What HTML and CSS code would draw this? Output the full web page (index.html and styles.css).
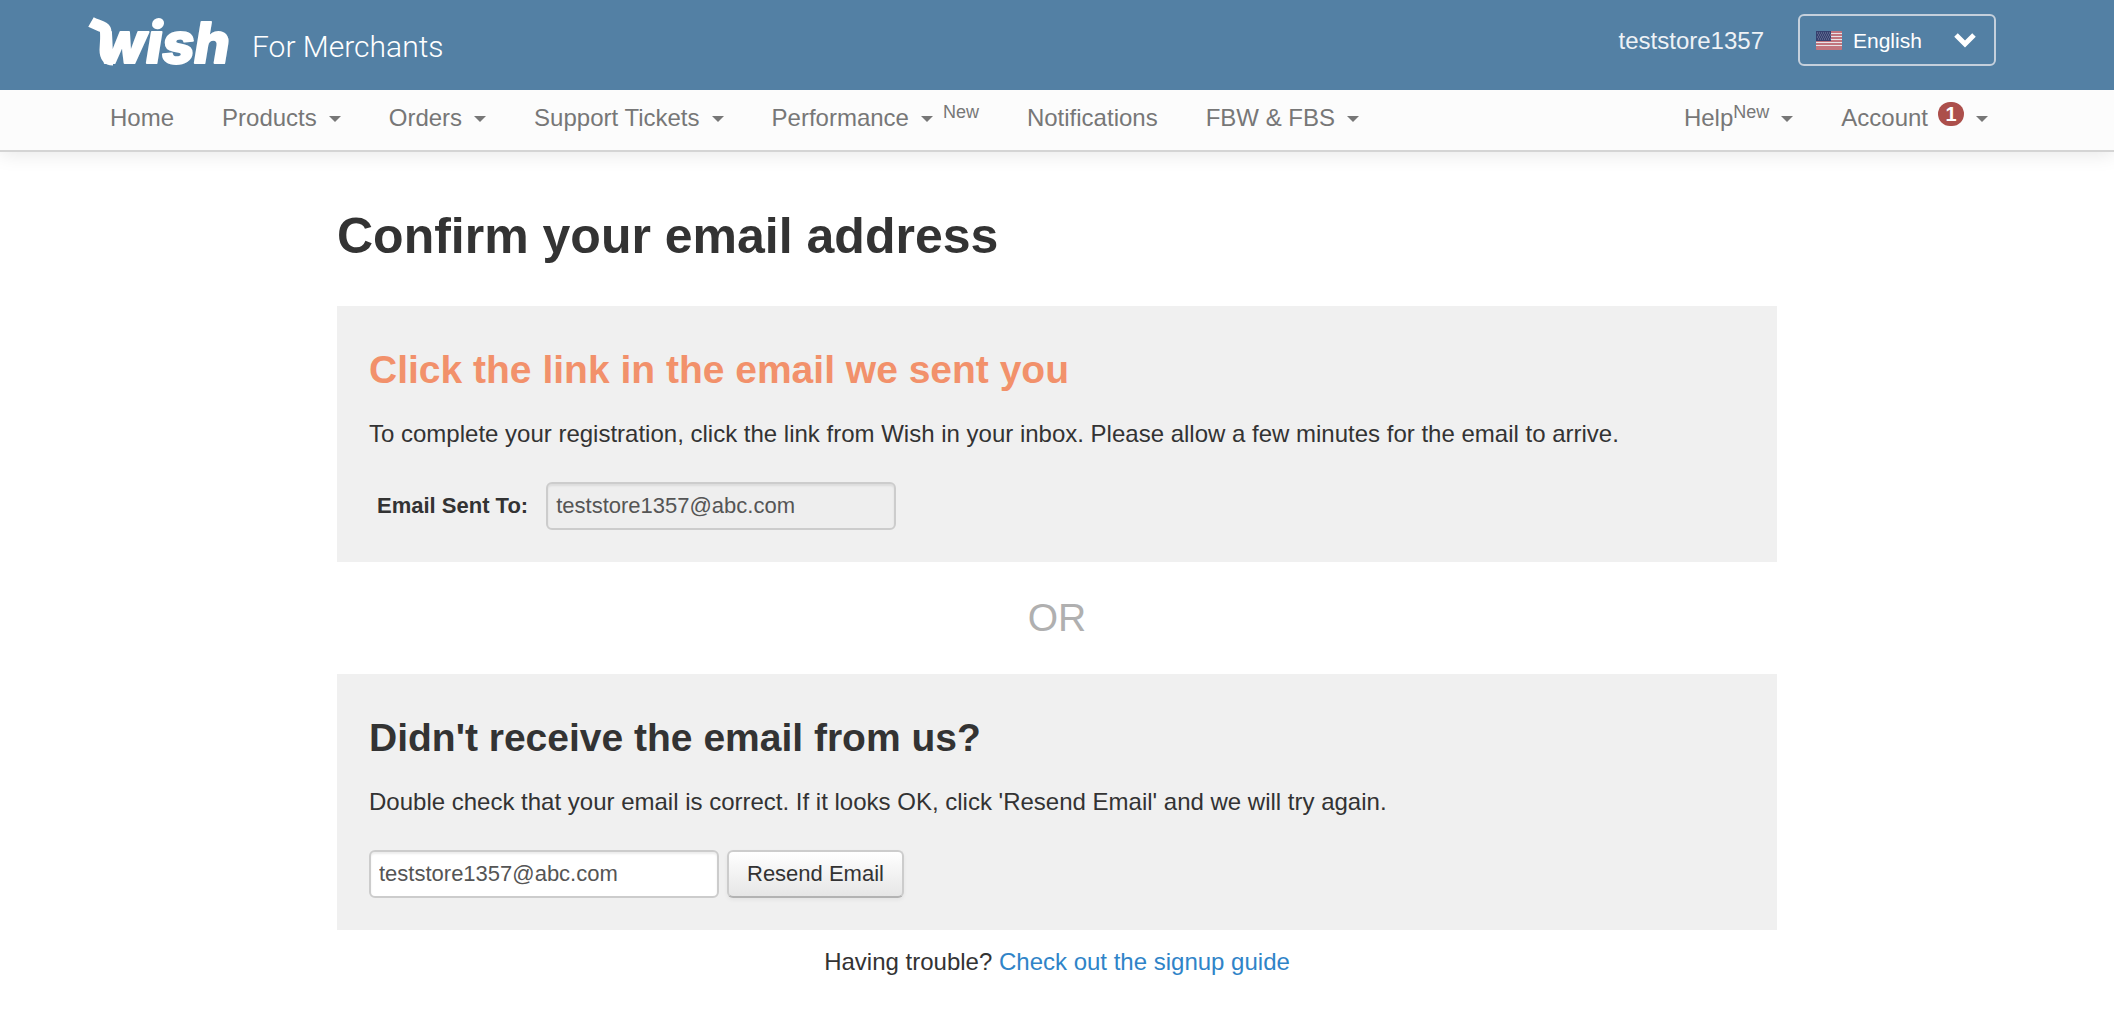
FILE: index.html
```
<!DOCTYPE html>
<html lang="en">
<head>
  <meta charset="UTF-8">
  <meta name="viewport" content="width=device-width, initial-scale=1.0">
  <title>Wish For Merchants</title>
  <link rel="stylesheet" href="styles.css">
</head>
<body>

<header class="header">
  <a href="#" class="brand">
    <svg class="logo" width="148" height="76" viewBox="0 0 148 76" role="img" aria-label="wish">
      <path class="logo-swash" d="M5 20 C12 24 20 24 20 30 L19 48 Q19 58 27 58" />
      <text class="logo-text" x="12" y="61">wish</text>
    </svg>
    <span class="brand-name">For Merchants</span>
  </a>
  <div class="header-right">
    <a href="#" class="username">teststore1357</a>
    <div class="language">
      <svg class="flag" width="26" height="19" viewBox="0 0 26 19" aria-hidden="true">
        <rect width="26" height="19" rx="1" fill="#e8e3e6" />
        <path d="M0 1h26M0 4h26M0 7h26M0 10h26M0 13h26M0 16h26M0 18h26" stroke="#b4525c" stroke-width="1.4" />
        <rect width="15" height="10" fill="#35406f" />
        <path d="M1 2h14M2 4h13M1 6h14M2 8h13" stroke="#8189a8" stroke-width="1" stroke-dasharray="1 1" />
      </svg>
      <select class="language-select" aria-label="Language">
        <option>English</option>
      </select>
      <svg class="chevron" width="22" height="16" viewBox="0 0 22 16" aria-hidden="true">
        <path d="M2 3L11 12L20 3" fill="none" stroke="#fff" stroke-width="5" />
      </svg>
    </div>
  </div>
</header>

<nav class="navbar">
  <ul class="nav">
    <li><a href="#">Home</a></li>
    <li><a href="#">Products <span class="caret"></span></a></li>
    <li><a href="#">Orders <span class="caret"></span></a></li>
    <li><a href="#">Support Tickets <span class="caret"></span></a></li>
    <li><a href="#">Performance <span class="caret"></span><sup class="new">New</sup></a></li>
    <li><a href="#">Notifications</a></li>
    <li><a href="#">FBW &amp; FBS <span class="caret"></span></a></li>
  </ul>
  <ul class="nav">
    <li><a href="#"><span>Help<sup class="new">New</sup></span> <span class="caret"></span></a></li>
    <li><a href="#">Account <span class="badge">1</span> <span class="caret"></span></a></li>
  </ul>
</nav>

<main class="container">
  <h1 class="title">Confirm your email address</h1>

  <section class="card">
    <h2 class="card-title highlight">Click the link in the email we sent you</h2>
    <p class="card-text">To complete your registration, click the link from Wish in your inbox. Please allow a few minutes for the email to arrive.</p>
    <div class="form-row sent-to">
      <label class="label" for="sentTo">Email Sent To:</label>
      <input class="input" type="text" id="sentTo" value="teststore1357@abc.com" disabled>
    </div>
  </section>

  <div class="or">OR</div>

  <section class="card">
    <h2 class="card-title">Didn't receive the email from us?</h2>
    <p class="card-text">Double check that your email is correct. If it looks OK, click 'Resend Email' and we will try again.</p>
    <form class="form-row">
      <input class="input" type="text" value="teststore1357@abc.com" aria-label="Email address">
      <button class="button" type="button">Resend Email</button>
    </form>
  </section>

  <p class="trouble">Having trouble? <a href="#">Check out the signup guide</a></p>
</main>

</body>
</html>
```
FILE: styles.css
```
* {
  box-sizing: border-box;
}
body {
  margin: 0;
  font-family: "Liberation Sans", Arial, sans-serif;
  font-size: 24px;
  line-height: 40px;
  color: #333;
  background-color: #fff;
}
a {
  color: #2f84c8;
  text-decoration: none;
}

/* Top bar */
.header {
  display: flex;
  justify-content: space-between;
  align-items: flex-start;
  padding: 0 118px 0 86px;
  height: 90px;
  background-color: #5380a4;
}
.brand {
  display: flex;
  gap: 18px;
  color: #fff;
}
.logo {
  margin-top: 2px;
}
.logo-swash {
  fill: none;
  stroke: #fff;
  stroke-width: 11;
}
.logo-text {
  font-family: Inter, sans-serif;
  font-size: 56px;
  font-weight: 800;
  font-style: italic;
  fill: #fff;
  stroke: #fff;
  stroke-width: 2;
  stroke-linejoin: round;
}
.brand-name {
  padding-top: 27px;
  font-family: Roboto, sans-serif;
  font-size: 30px;
  font-weight: 300;
}
.header-right {
  display: flex;
  align-items: center;
  gap: 34px;
  padding-top: 14px;
}
.username {
  padding-top: 2px;
  color: #eef2f6;
}
.language {
  display: flex;
  align-items: center;
  width: 198px;
  height: 52px;
  padding: 0 18px 0 16px;
  border: 2px solid #c5d0dc;
  border-radius: 6px;
}
.language-select {
  flex: 1;
  appearance: none;
  padding: 0 0 0 11px;
  border: none;
  background: none;
  color: #fff;
  font-family: inherit;
  font-size: 21px;
}

/* Navigation */
.navbar {
  display: flex;
  justify-content: space-between;
  padding: 0 126px 0 110px;
  height: 62px;
  background-color: #fcfcfc;
  border-bottom: 2px solid #d4d4d4;
  box-shadow: 0 2px 20px rgba(0, 0, 0, 0.1);
}
.header {
  position: relative;
  z-index: 1;
}
.nav {
  display: flex;
  gap: 48px;
  margin: 0;
  padding: 8px 0 0;
  list-style: none;
}
.nav a {
  display: flex;
  align-items: center;
  gap: 10px;
  color: #777;
  white-space: nowrap;
}
.caret {
  margin: 2px 0 0 2px;
  border-top: 6px solid #777;
  border-left: 6px solid transparent;
  border-right: 6px solid transparent;
}
.new {
  font-size: 18px;
  line-height: 20px;
  vertical-align: 8px;
}
.caret + .new {
  padding-bottom: 12px;
}
.badge {
  width: 26px;
  height: 24px;
  margin-bottom: 8px;
  border-radius: 12px;
  background-color: #ac4f4b;
  color: #fff;
  font-size: 20px;
  font-weight: bold;
  line-height: 24px;
  text-align: center;
}

/* Content */
.container {
  max-width: 1440px;
  margin: 0 auto;
}
.title {
  margin: 0;
  padding: 54px 0 40px;
  font-size: 50px;
  line-height: 60px;
}
.card {
  padding: 44px 32px 32px;
  background-color: #f0f0f0;
}
.card-title {
  margin: 0;
  font-size: 39px;
  line-height: 40px;
}
.highlight {
  color: #f2916b;
}
.card-text {
  margin: 24px 0 28px;
}
.form-row {
  display: flex;
  align-items: center;
  gap: 8px;
}
.sent-to {
  gap: 18px;
  padding-left: 8px;
}
.label {
  font-size: 22px;
  font-weight: bold;
}
.input {
  width: 350px;
  height: 48px;
  padding: 0 8px;
  border: 2px solid #ccc;
  border-radius: 6px;
  background-color: #fff;
  box-shadow: inset 0 2px 2px rgba(0, 0, 0, 0.075);
  color: #555;
  font-family: inherit;
  font-size: 22px;
}
.input:disabled {
  background-color: #eee;
}
.button {
  height: 48px;
  padding: 0 18px;
  border: 2px solid #ccc;
  border-bottom-color: #b3b3b3;
  border-radius: 6px;
  background: linear-gradient(#fff, #e6e6e6);
  box-shadow: 0 2px 4px rgba(0, 0, 0, 0.05);
  color: #333;
  font-family: inherit;
  font-size: 22px;
  cursor: pointer;
}
.or {
  padding: 36px 0;
  color: #b0b0b0;
  font-size: 39px;
  text-align: center;
}
.trouble {
  margin: 12px 0 0;
  text-align: center;
}
```
